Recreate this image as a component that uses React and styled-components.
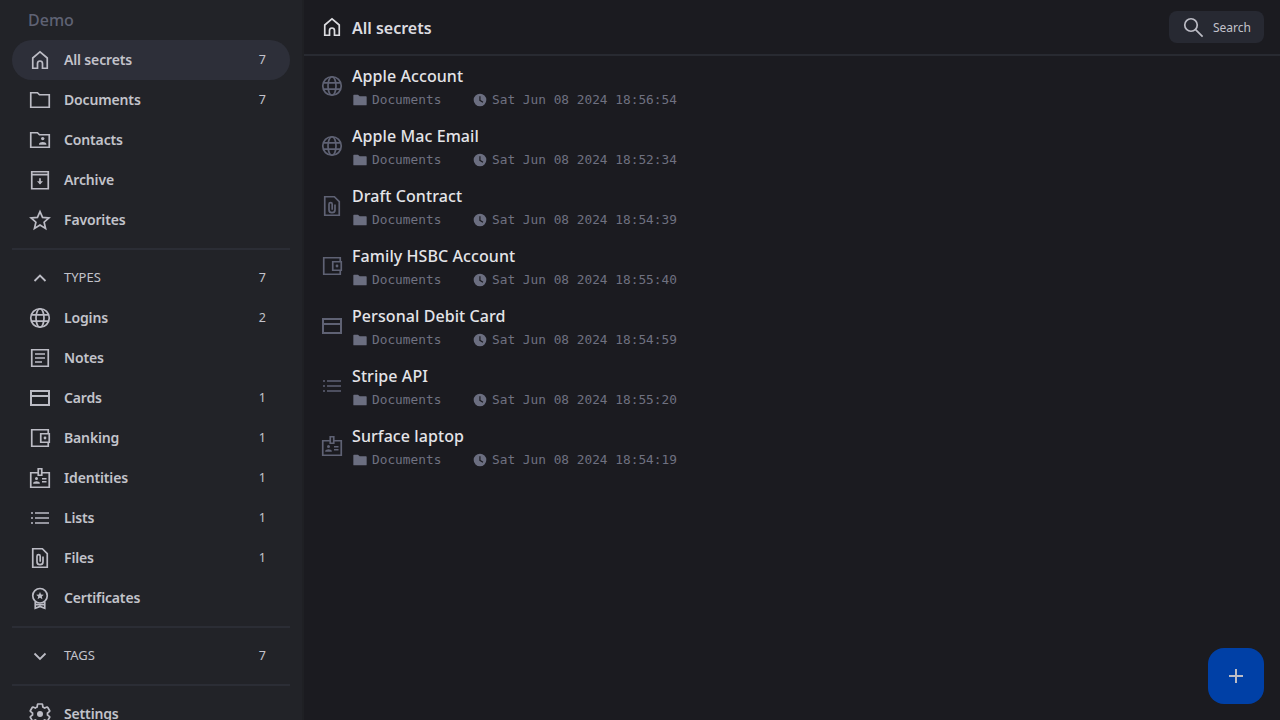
import React from 'react'
import styled, { createGlobalStyle } from 'styled-components'

const GlobalStyle = createGlobalStyle`
html, body {
    margin: 0;
    height: 100%;
    overflow: hidden;
    background: #1b1b20;
}
#root {
    height: 100%;
}
`

const Page = styled.div`
display: flex;
height: 720px;
font-family: "Noto Sans", sans-serif;
color: #c3c3cb;
`
const Sidebar = styled.aside`
width: 304px;
flex: none;
height: 720px;
overflow: hidden;
box-sizing: border-box;
padding: 0 12px;
background: #222328;
border-right: 2px solid #1f2024;
`
const VaultName = styled.div`
height: 40px;
line-height: 40px;
padding-left: 16px;
font-size: 16px;
font-weight: 500;
color: #5f6274;
`
const Row = styled.div`
display: flex;
align-items: center;
height: 40px;
padding: 0 24px 0 16px;
border-radius: 20px;
background: ${p => p.$active ? '#2d2f39' : 'transparent'};
`
const RowLabel = styled.span`
flex: 1;
margin: 0 0 2px 12px;
font-size: 14px;
font-weight: 600;
letter-spacing: -0.15px;
`
const SectionLabel = styled.span`
flex: 1;
margin: 0 0 2px 12px;
font-size: 13px;
text-transform: uppercase;
`
const Count = styled.span`
margin-bottom: 2px;
font-size: 12.5px;
`
const Divider = styled.div`
height: 2px;
margin: 8px 0;
background: #2b2d35;
`
const Main = styled.main`
flex: 1;
min-width: 0;
`
const Header = styled.header`
display: flex;
align-items: center;
height: 56px;
box-sizing: border-box;
padding: 0 16px;
border-bottom: 2px solid #282a31;
`
const Title = styled.h1`
flex: 1;
margin: 2px 0 0 8px;
font-size: 16px;
font-weight: 600;
color: #dcdce0;
`
const SearchButton = styled.button`
display: flex;
align-items: center;
width: 95px;
height: 32px;
padding: 0 12px;
box-sizing: border-box;
border: none;
border-radius: 8px;
background: #272932;
color: #c3c3cb;
font-family: inherit;
font-size: 12px;
`
const SearchText = styled.span`
margin-left: 8px;
`
const SecretRow = styled.div`
display: flex;
align-items: center;
height: 60px;
padding-left: 16px;
`
const SecretBody = styled.div`
margin-left: 8px;
padding-top: 4px;
`
const SecretName = styled.div`
height: 24px;
line-height: 24px;
font-size: 16px;
font-weight: 500;
letter-spacing: 0.08px;
color: #e4e4e8;
`
const Meta = styled.div`
display: flex;
align-items: center;
height: 24px;
font-family: "DejaVu Sans Mono", monospace;
font-size: 12.8px;
color: #6f7180;
`
const MetaText = styled.span`
margin: 0 0 1px 4px;
width: ${p => p.$width || 'auto'};
`
const Fab = styled.button`
position: fixed;
right: 16px;
bottom: 16px;
display: flex;
align-items: center;
justify-content: center;
width: 56px;
height: 56px;
padding: 0;
border: none;
border-radius: 16px;
background: #0040a6;
color: #c9d6f2;
`
const Svg = styled.svg`
flex: none;
display: block;
fill: none;
stroke: currentColor;
stroke-width: ${p => p.$weight || 1.7};
color: ${p => p.$color || '#bcbcc5'};
`

const Icon = ({ size = 24, color, weight, children }) => (
    <Svg width={size} height={size} viewBox="0 0 24 24" $color={color} $weight={weight}>
        {children}
    </Svg>
)

const paths = {
    home: <path d="M4.75 20.25V10L12 3.9 19.25 10v10.25H14.5V15.5a2.5 2.5 0 0 0-5 0v4.75z" />,
    folder: <path d="M2.75 4.75h6.7l2 2h9.8v12.5H2.75z" />,
    contacts: <>
        <path d="M2.75 4.75h6.7l2 2h9.8v12.5H2.75z" />
        <circle cx="14.7" cy="10.6" r="1.7" fill="currentColor" stroke="none" />
        <path d="M11 16.8v-.8c0-1.2 2-2 3.7-2s3.7.8 3.7 2v.8z" fill="currentColor" stroke="none" />
    </>,
    archive: <>
        <path d="M3.75 3.75h16.5v17H3.75zM3.75 6.6h16.5" />
        <path d="M12 10.2v5.2" />
        <path d="M9 13.2h6L12 16.6z" fill="currentColor" stroke="none" />
    </>,
    star: <path d="M12 3.6l2.55 5.85 6.35.55-4.8 4.2 1.45 6.2L12 17.1l-5.55 3.3 1.45-6.2L3.1 10l6.35-.55z" />,
    up: <path d="M6.5 15L12 9.5 17.5 15" />,
    down: <path d="M6.5 9.5L12 15l5.5-5.5" />,
    globe: <>
        <circle cx="12" cy="12" r="9.25" />
        <ellipse cx="12" cy="12" rx="4" ry="9.25" />
        <path d="M3.4 8.8h17.2M3.4 15.2h17.2" />
    </>,
    notes: <>
        <path d="M3.75 3.75h16.5v16.5H3.75z" />
        <path d="M7 8h10M7 12h10M7 16h7" />
    </>,
    card: <path d="M2 4h20v16H2zM4 6v3h16V6zM4 11v7h16v-7z" fill="currentColor" fillRule="evenodd" stroke="none" />,
    wallet: <>
        <path d="M20.25 7.5V3.75H3.75v16.5h16.5V16.5" />
        <path d="M12.75 7.75h8.5v8.5h-8.5z" />
        <circle cx="17" cy="12" r="1.4" fill="currentColor" stroke="none" />
    </>,
    identity: <>
        <path d="M10 6.75H2.75v14.5h18.5V6.75H14" />
        <path d="M10.25 2.75h3.5v6.5h-3.5z" />
        <circle cx="8.5" cy="12.6" r="1.5" fill="currentColor" stroke="none" />
        <path d="M5.2 17.8v-.8c0-1.1 2-1.8 3.3-1.8s3.3.7 3.3 1.8v.8z" fill="currentColor" stroke="none" />
        <path d="M14 12.75h4.5M14 15.75h4.5" />
    </>,
    list: <>
        <path d="M7 7h14M7 12h14M7 17h14" />
        <path d="M3 7h2M3 12h2M3 17h2" />
    </>,
    file: <>
        <path d="M4.75 2.75h9.6l4.9 4.9v13.6H4.75z" />
        <path d="M15 10.5v5.2a3 3 0 0 1-6 0v-5.4a1.6 1.6 0 0 1 3.2 0v5.4" />
    </>,
    certificate: <>
        <circle cx="12" cy="9.75" r="7.25" />
        <path d="M12 6l1.1 2.5 2.7.25-2 1.8.6 2.65L12 11.8l-2.4 1.4.6-2.65-2-1.8 2.7-.25z" fill="currentColor" stroke="none" />
        <path d="M7.25 16v6.25L12 20.5l4.75 1.75V16M7.25 18.6h9.5" />
    </>,
    settings: <>
        <path d="M19.43 12.98c.04-.32.07-.64.07-.98s-.03-.66-.07-.98l2.11-1.65c.19-.15.24-.42.12-.64l-2-3.46c-.12-.22-.39-.3-.61-.22l-2.49 1c-.52-.4-1.08-.73-1.69-.98l-.38-2.65A.49.49 0 0 0 14 2h-4c-.25 0-.46.18-.49.42l-.38 2.65c-.61.25-1.17.59-1.69.98l-2.49-1a.5.5 0 0 0-.61.22l-2 3.46c-.13.22-.07.49.12.64l2.11 1.65c-.04.32-.07.65-.07.98s.03.66.07.98l-2.11 1.65c-.19.15-.24.42-.12.64l2 3.46c.12.22.39.3.61.22l2.49-1c.52.4 1.08.73 1.69.98l.38 2.65c.03.24.24.42.49.42h4c.25 0 .46-.18.49-.42l.38-2.65c.61-.25 1.17-.59 1.69-.98l2.49 1c.22.08.49 0 .61-.22l2-3.46c.12-.22.07-.49-.12-.64z" />
        <circle cx="12" cy="12" r="3" fill="currentColor" stroke="none" />
    </>,
    search: <>
        <circle cx="10" cy="10" r="6.25" />
        <path d="M14.6 14.6l7 7" />
    </>,
    plus: <path d="M12 5v14M5 12h14" />,
    metaFolder: <path d="M2 5a1 1 0 0 1 1-1h6l2.5 2.5H21a1 1 0 0 1 1 1V19a1 1 0 0 1-1 1H3a1 1 0 0 1-1-1z" fill="currentColor" stroke="none" />,
    clock: <path d="M12 2.5a9.5 9.5 0 1 0 0 19 9.5 9.5 0 0 0 0-19zm4 13.6L11 13V6.5h1.8v5.5l4.2 2.6z" fill="currentColor" fillRule="evenodd" stroke="none" />,
}

const mainNav = [
    { icon: 'home', label: 'All secrets', count: 7, active: true },
    { icon: 'folder', label: 'Documents', count: 7 },
    { icon: 'contacts', label: 'Contacts' },
    { icon: 'archive', label: 'Archive' },
    { icon: 'star', label: 'Favorites' },
]
const typeNav = [
    { icon: 'globe', label: 'Logins', count: 2 },
    { icon: 'notes', label: 'Notes' },
    { icon: 'card', label: 'Cards', count: 1 },
    { icon: 'wallet', label: 'Banking', count: 1 },
    { icon: 'identity', label: 'Identities', count: 1 },
    { icon: 'list', label: 'Lists', count: 1 },
    { icon: 'file', label: 'Files', count: 1 },
    { icon: 'certificate', label: 'Certificates' },
]
const secrets = [
    { icon: 'globe', name: 'Apple Account', date: 'Sat Jun 08 2024 18:56:54' },
    { icon: 'globe', name: 'Apple Mac Email', date: 'Sat Jun 08 2024 18:52:34' },
    { icon: 'file', name: 'Draft Contract', date: 'Sat Jun 08 2024 18:54:39' },
    { icon: 'wallet', name: 'Family HSBC Account', date: 'Sat Jun 08 2024 18:55:40' },
    { icon: 'card', name: 'Personal Debit Card', date: 'Sat Jun 08 2024 18:54:59' },
    { icon: 'list', name: 'Stripe API', date: 'Sat Jun 08 2024 18:55:20' },
    { icon: 'identity', name: 'Surface laptop', date: 'Sat Jun 08 2024 18:54:19' },
]

const NavRow = ({ icon, label, count, active }) => (
    <Row $active={active}>
        <Icon>{paths[icon]}</Icon>
        <RowLabel>{label}</RowLabel>
        {count && <Count>{count}</Count>}
    </Row>
)

const SectionRow = ({ icon, label, count }) => (
    <Row>
        <Icon weight={1.8}>{paths[icon]}</Icon>
        <SectionLabel>{label}</SectionLabel>
        <Count>{count}</Count>
    </Row>
)

const Secret = ({ icon, name, date }) => (
    <SecretRow>
        <Icon color="#5f6274">{paths[icon]}</Icon>
        <SecretBody>
            <SecretName>{name}</SecretName>
            <Meta>
                <Icon size={16} color="#6b6e80">{paths.metaFolder}</Icon>
                <MetaText $width="100px">Documents</MetaText>
                <Icon size={16} color="#6b6e80">{paths.clock}</Icon>
                <MetaText>{date}</MetaText>
            </Meta>
        </SecretBody>
    </SecretRow>
)

export default function App() {
    return (
        <Page>
            <GlobalStyle />
            <Sidebar>
                <VaultName>Demo</VaultName>
                {mainNav.map(item => <NavRow key={item.label} {...item} />)}
                <Divider />
                <SectionRow icon="up" label="Types" count={7} />
                {typeNav.map(item => <NavRow key={item.label} {...item} />)}
                <Divider />
                <SectionRow icon="down" label="Tags" count={7} />
                <Divider />
                <NavRow icon="settings" label="Settings" />
            </Sidebar>
            <Main>
                <Header>
                    <Icon color="#dcdce0">{paths.home}</Icon>
                    <Title>All secrets</Title>
                    <SearchButton>
                        <Icon>{paths.search}</Icon>
                        <SearchText>Search</SearchText>
                    </SearchButton>
                </Header>
                {secrets.map(item => <Secret key={item.name} {...item} />)}
            </Main>
            <Fab>
                <Icon weight={2}>{paths.plus}</Icon>
            </Fab>
        </Page>
    )
}
